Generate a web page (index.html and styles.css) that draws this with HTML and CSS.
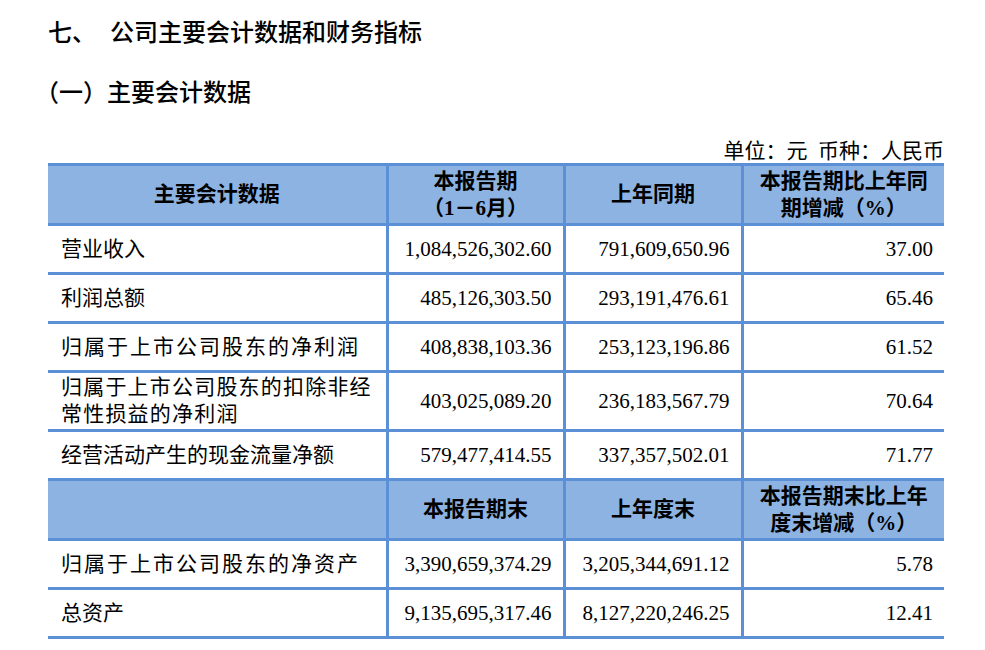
FILE: index.html
```html
<!DOCTYPE html>
<html lang="zh-CN">
<head>
<meta charset="utf-8">
<title>主要会计数据</title>
<link rel="stylesheet" href="styles.css">
</head>
<body>
<div class="page">
  <h1 class="title"><span class="num">七、</span>公司主要会计数据和财务指标</h1>
  <h2 class="subtitle">（一）主要会计数据</h2>
  <div class="unit">单位：元&nbsp;&nbsp;币种：人民币</div>
  <table class="data">
    <colgroup>
      <col class="c1"><col class="c2"><col class="c3"><col class="c4">
    </colgroup>
    <tr class="head">
      <th>主要会计数据</th>
      <th>本报告期<br>（1－6月）</th>
      <th>上年同期</th>
      <th>本报告期比上年同<br>期增减（%）</th>
    </tr>
    <tr class="row">
      <td class="label">营业收入</td>
      <td>1,084,526,302.60</td>
      <td>791,609,650.96</td>
      <td>37.00</td>
    </tr>
    <tr class="row">
      <td class="label">利润总额</td>
      <td>485,126,303.50</td>
      <td>293,191,476.61</td>
      <td>65.46</td>
    </tr>
    <tr class="row">
      <td class="label wide">归属于上市公司股东的净利润</td>
      <td>408,838,103.36</td>
      <td>253,123,196.86</td>
      <td>61.52</td>
    </tr>
    <tr class="row tall">
      <td class="label two">归属于上市公司股东的扣除非经<br>常性损益的净利润</td>
      <td>403,025,089.20</td>
      <td>236,183,567.79</td>
      <td>70.64</td>
    </tr>
    <tr class="row">
      <td class="label">经营活动产生的现金流量净额</td>
      <td>579,477,414.55</td>
      <td>337,357,502.01</td>
      <td>71.77</td>
    </tr>
    <tr class="head">
      <th></th>
      <th>本报告期末</th>
      <th>上年度末</th>
      <th>本报告期末比上年<br>度末增减（%）</th>
    </tr>
    <tr class="row">
      <td class="label wide">归属于上市公司股东的净资产</td>
      <td>3,390,659,374.29</td>
      <td>3,205,344,691.12</td>
      <td>5.78</td>
    </tr>
    <tr class="row">
      <td class="label">总资产</td>
      <td>9,135,695,317.46</td>
      <td>8,127,220,246.25</td>
      <td>12.41</td>
    </tr>
  </table>
</div>
</body>
</html>
```

FILE: styles.css
```css
html, body {
  margin: 0;
  padding: 0;
  background: #ffffff;
}

.page {
  padding: 0 41px 0 48px;
  color: #000;
  font-family: "Liberation Serif", "Noto Sans CJK SC", serif;
}

.title,
.subtitle {
  margin: 0;
  font-family: "Noto Sans CJK SC", sans-serif;
  font-weight: 500;
  font-size: 24px;
  line-height: 30px;
}

.title {
  margin-top: 16px;
}

.title .num {
  display: inline-block;
  width: 62px;
}

.subtitle {
  margin-top: 30px;
  margin-left: -13px;
}

.unit {
  margin-top: 33px;
  text-align: right;
  font-size: 21px;
  line-height: 24px;
  font-family: "Liberation Serif", "Noto Sans CJK SC", serif;
}

.data {
  margin-top: 0;
  width: 896px;
  border-collapse: collapse;
  table-layout: fixed;
  font-size: 21px;
}

.c1 { width: 339px; }
.c2 { width: 177px; }
.c3 { width: 178px; }
.c4 { width: 202px; }

.data th,
.data td {
  border: 3px solid #5b8fd6;
  padding: 0 10px;
}

.data tr > :first-child { border-left: none; }
.data tr > :last-child { border-right: none; }

.head th {
  background: #8db3e2;
  height: 57px;
  font-family: "Liberation Serif", "Noto Sans CJK SC", serif;
  font-weight: 700;
  font-size: 21px;
  line-height: 27px;
  text-align: center;
  padding: 0 2px;
}

.row td {
  height: 46px;
  line-height: 26px;
  text-align: right;
  padding-right: 11px;
}

.row.tall td {
  height: 56px;
}

.row td.label {
  text-align: left;
  padding-left: 13px;
  padding-right: 4px;
  white-space: nowrap;
}

.row td.wide {
  letter-spacing: 2px;
}

.row td.two {
  letter-spacing: 1.2px;
  line-height: 27px;
}
```
